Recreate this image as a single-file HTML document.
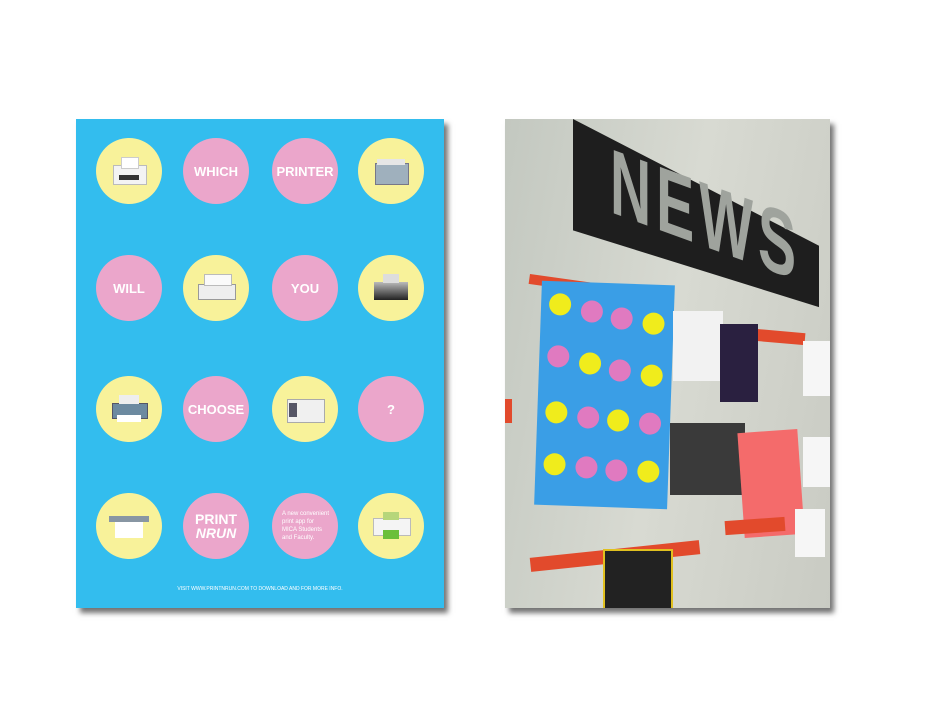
<!DOCTYPE html><html><head><style>
body{margin:0;width:936px;height:720px;background:#fff;position:relative;overflow:hidden;font-family:"Liberation Sans",sans-serif}
.a{position:absolute}
.poster{left:76px;top:119px;width:368px;height:489px;background:#33bdee;box-shadow:4px 5px 5px rgba(0,0,0,.55)}
.c{position:absolute;width:66px;height:66px;border-radius:50%;margin:-33px 0 0 -33px;display:flex;align-items:center;justify-content:center;color:#fff;font-weight:bold;font-size:13px;text-align:center}
.p{background:#eba6cb}.y{background:#f8f29a}
.pr{position:relative;width:40px;height:28px}
.pr i{position:absolute;display:block}
.photo{left:505px;top:119px;width:325px;height:489px;background:linear-gradient(100deg,#c3c8c0,#d8dad2 50%,#c9cbc3);box-shadow:4px 5px 5px rgba(0,0,0,.55);overflow:hidden}
.s{position:absolute;width:22px;height:22px;border-radius:50%}
.sp{background:#e07ac0}.sy{background:#f0ec1c}
</style></head><body>
<div class="a poster">
<div class="c y" style="left:53px;top:52px"><div class="pr"><i style="left:4px;top:8px;width:32px;height:18px;background:#f3f3f3;border:1px solid #bbb"></i><i style="left:12px;top:0;width:16px;height:10px;background:#fff;border:1px solid #ccc"></i><i style="left:10px;top:18px;width:20px;height:5px;background:#333"></i></div></div>
<div class="c p" style="left:140px;top:52px">WHICH</div>
<div class="c p" style="left:229px;top:52px">PRINTER</div>
<div class="c y" style="left:315px;top:52px"><div class="pr"><i style="left:4px;top:6px;width:32px;height:20px;background:#9fb0bd;border:1px solid #778"></i><i style="left:6px;top:2px;width:28px;height:6px;background:#e6e6e6"></i></div></div>
<div class="c p" style="left:53px;top:169px">WILL</div>
<div class="c y" style="left:140px;top:169px"><div class="pr"><i style="left:2px;top:10px;width:36px;height:14px;background:#eee;border:1px solid #999"></i><i style="left:8px;top:0;width:26px;height:10px;background:#fafafa;border:1px solid #bbb"></i></div></div>
<div class="c p" style="left:229px;top:169px">YOU</div>
<div class="c y" style="left:315px;top:169px"><div class="pr"><i style="left:3px;top:8px;width:34px;height:18px;background:linear-gradient(#bbb,#222)"></i><i style="left:12px;top:0;width:16px;height:9px;background:#ddd"></i></div></div>
<div class="c y" style="left:53px;top:290px"><div class="pr"><i style="left:3px;top:8px;width:34px;height:14px;background:#6c8aa0;border:1px solid #556"></i><i style="left:10px;top:0;width:20px;height:9px;background:#eee"></i><i style="left:8px;top:20px;width:24px;height:7px;background:#fff"></i></div></div>
<div class="c p" style="left:140px;top:290px">CHOOSE</div>
<div class="c y" style="left:229px;top:290px"><div class="pr"><i style="left:2px;top:4px;width:36px;height:22px;background:#f0f0f0;border:1px solid #aaa"></i><i style="left:4px;top:8px;width:8px;height:14px;background:#556"></i></div></div>
<div class="c p" style="left:315px;top:290px">?</div>
<div class="c y" style="left:53px;top:407px"><div class="pr"><i style="left:0;top:4px;width:40px;height:6px;background:#8896a3"></i><i style="left:6px;top:10px;width:28px;height:16px;background:#fff"></i></div></div>
<div class="c p" style="left:140px;top:407px;font-size:14px;line-height:14px"><span>PRINT<br><i>NRUN</i></span></div>
<div class="c p" style="left:229px;top:407px;font-weight:normal;font-size:6px;line-height:8px;text-align:left;padding-left:10px;box-sizing:border-box;justify-content:flex-start"><span>A new convenient<br>print app for<br>MICA Students<br>and Faculty.</span></div>
<div class="c y" style="left:315px;top:407px"><div class="pr"><i style="left:2px;top:6px;width:36px;height:16px;background:#f4f4f4;border:1px solid #bbb"></i><i style="left:12px;top:0;width:16px;height:8px;background:#b6d67a"></i><i style="left:12px;top:18px;width:16px;height:9px;background:#6cbf3a"></i></div></div>
<div class="a" style="left:0;width:368px;top:467px;text-align:center;color:#fff;font-size:5px">VISIT WWW.PRINTNRUN.COM TO DOWNLOAD AND FOR MORE INFO.</div>
</div>
<div class="a photo">
<div class="a" style="left:68px;top:0;width:246px;height:192px;background:#1e1e1e;clip-path:polygon(0 0,100% 66%,100% 98%,0 58%)"></div>
<div class="a" style="left:105px;top:10px;font:bold 92px 'Liberation Sans';color:#9fa39d;transform:skewY(20deg) scaleX(.62);transform-origin:0 0;letter-spacing:8px">NEWS</div>
<div class="a" style="left:25px;top:155px;width:140px;height:10px;background:#e24a2c;transform:rotate(8deg);transform-origin:0 0"></div>
<div class="a" style="left:250px;top:212px;width:50px;height:12px;background:#e24a2c;transform:rotate(5deg)"></div>
<div class="a" style="left:-5px;top:280px;width:12px;height:24px;background:#e24a2c"></div>
<div class="a" style="left:33px;top:164px;width:133px;height:224px;background:#3a9ee6;transform:rotate(2deg)">
<div class="s sy" style="left:8px;top:12px"></div><div class="s sp" style="left:40px;top:18px"></div><div class="s sp" style="left:70px;top:24px"></div><div class="s sy" style="left:102px;top:28px"></div>
<div class="s sp" style="left:8px;top:64px"></div><div class="s sy" style="left:40px;top:70px"></div><div class="s sp" style="left:70px;top:76px"></div><div class="s sy" style="left:102px;top:80px"></div>
<div class="s sy" style="left:8px;top:120px"></div><div class="s sp" style="left:40px;top:124px"></div><div class="s sy" style="left:70px;top:126px"></div><div class="s sp" style="left:102px;top:128px"></div>
<div class="s sy" style="left:8px;top:172px"></div><div class="s sp" style="left:40px;top:174px"></div><div class="s sp" style="left:70px;top:176px"></div><div class="s sy" style="left:102px;top:176px"></div>
</div>
<div class="a" style="left:168px;top:192px;width:50px;height:70px;background:#f2f2f2"></div>
<div class="a" style="left:215px;top:205px;width:38px;height:78px;background:#2a2040"></div>
<div class="a" style="left:298px;top:222px;width:30px;height:55px;background:#f6f6f6"></div>
<div class="a" style="left:165px;top:304px;width:75px;height:72px;background:#3a3a3a"></div>
<div class="a" style="left:236px;top:312px;width:60px;height:105px;background:#f46b6b;transform:rotate(-4deg)"></div>
<div class="a" style="left:298px;top:318px;width:30px;height:50px;background:#f6f6f6"></div>
<div class="a" style="left:25px;top:430px;width:170px;height:14px;background:#e24a2c;transform:rotate(-6deg)"></div>
<div class="a" style="left:220px;top:400px;width:60px;height:14px;background:#e24a2c;transform:rotate(-4deg)"></div>
<div class="a" style="left:98px;top:430px;width:66px;height:60px;background:#222;border:2px solid #e0c020"></div>
<div class="a" style="left:290px;top:390px;width:30px;height:48px;background:#f6f6f6"></div>
</div>
</body></html>
